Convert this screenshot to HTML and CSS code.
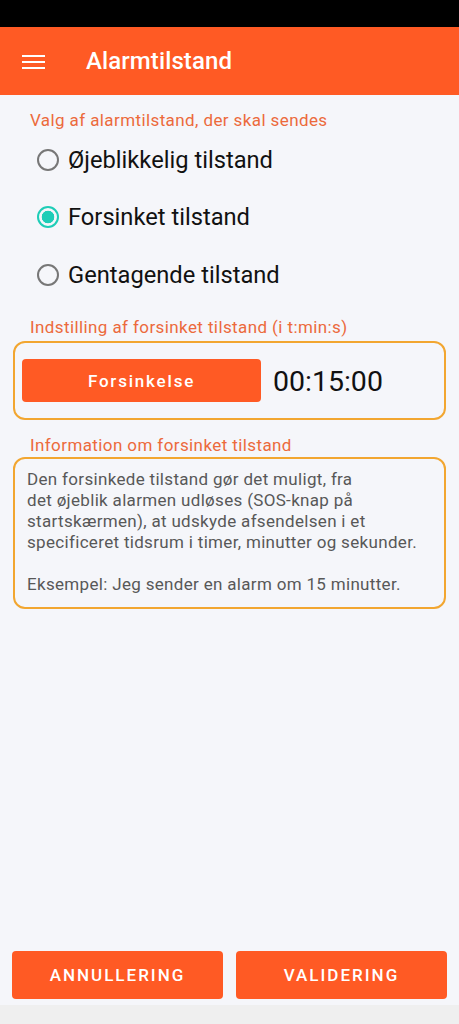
FILE: index.html
```html
<!DOCTYPE html>
<html lang="da">
<head>
<meta charset="utf-8">
<link rel="stylesheet" href="styles.css">
</head>
<body>
<div class="screen">
  <div class="statusbar"></div>
  <header class="appbar">
    <svg class="menu" width="24" height="16" viewBox="0 0 24 16"><rect x="0" y="1" width="23" height="2" fill="#fff"/><rect x="0" y="7" width="23" height="2" fill="#fff"/><rect x="0" y="13" width="23" height="2" fill="#fff"/></svg>
    <h1 class="title">Alarmtilstand</h1>
  </header>
  <main class="content">
    <div class="label first">Valg af alarmtilstand, der skal sendes</div>
    <div class="radios">
      <div class="radio"><span class="circle"></span><span class="rtext">Øjeblikkelig tilstand</span></div>
      <div class="radio"><span class="circle on"></span><span class="rtext">Forsinket tilstand</span></div>
      <div class="radio"><span class="circle"></span><span class="rtext">Gentagende tilstand</span></div>
    </div>
    <div class="label second">Indstilling af forsinket tilstand (i t:min:s)</div>
    <div class="box delay">
      <div class="delaybtn">Forsinkelse</div>
      <div class="time">00:15:00</div>
    </div>
    <div class="label third">Information om forsinket tilstand</div>
    <div class="box info">
      <p>Den forsinkede tilstand gør det muligt, fra<br>det øjeblik alarmen udløses (SOS-knap på<br>startskærmen), at udskyde afsendelsen i et<br>specificeret tidsrum i timer, minutter og sekunder.</p>
      <p>Eksempel: Jeg sender en alarm om 15 minutter.</p>
    </div>
  </main>
  <footer class="actions">
    <div class="btn">ANNULLERING</div>
    <div class="btn">VALIDERING</div>
  </footer>
  <div class="navbar"></div>
</div>
</body>
</html>
```
FILE: styles.css
```css
* { box-sizing: border-box; }
html, body { margin: 0; padding: 0; }
body { font-family: Roboto, "Noto Sans", sans-serif; background: #f5f6fa; }
.screen { width: 459px; height: 1024px; display: flex; flex-direction: column; background: #f5f6fa; }
.statusbar { height: 27px; background: #000; flex: none; }
.appbar { height: 68px; background: #ff5a24; display: flex; align-items: center; flex: none; }
.menu { margin-left: 22px; margin-top: 1px; }
.title { margin: 0 0 0 40px; font-size: 24px; font-weight: 500; color: #fff; letter-spacing: 0.1px; }
.content { flex: 1; padding: 0 13px; }
.label { color: #ec6a3c; font-size: 17px; letter-spacing: 0.4px; padding-left: 17px; line-height: 20px; white-space: nowrap; }
.label.first { margin-top: 15px; }
.radios { display: flex; flex-direction: column; padding-left: 24px; margin-top: 1px; }
.radio { display: flex; align-items: center; height: 57.5px; }
.circle { width: 22px; height: 22px; border-radius: 50%; border: 2px solid #777; margin-right: 9px; flex: none; background: transparent; }
.circle.on { border-color: #1ecdb7; background: radial-gradient(circle, #1ecdb7 0 6px, transparent 6.6px); }
.rtext { font-size: 23.7px; color: #111; }
.label.second { margin-top: 13.5px; }
.box { border: 2px solid #f2a630; border-radius: 12px; }
.delay { margin-top: 4px; height: 79px; display: flex; align-items: center; padding-left: 7px; }
.delaybtn { width: 239px; height: 43px; background: #ff5a24; border-radius: 4px; color: #fff; font-size: 17px; font-weight: 500; letter-spacing: 1.8px; display: flex; align-items: center; justify-content: center; }
.time { font-size: 28.5px; color: #111; margin-left: 12px; margin-top: 1px; }
.label.third { margin-top: 15px; }
.info { margin-top: 2px; height: 152px; padding: 9.5px 4px 0 12px; color: #585858; font-size: 17px; letter-spacing: 0.32px; line-height: 21px; white-space: nowrap; }
.info p { margin: 0 0 21px 0; }
.actions { display: flex; gap: 13px; padding: 0 12px 0 12px; flex: none; margin-bottom: 6px; }
.btn { flex: 1; height: 48px; background: #ff5a24; border-radius: 4px; color: #fff; font-size: 17px; font-weight: 500; letter-spacing: 2px; display: flex; align-items: center; justify-content: center; }
.navbar { height: 19px; background: #efefef; flex: none; }
```
